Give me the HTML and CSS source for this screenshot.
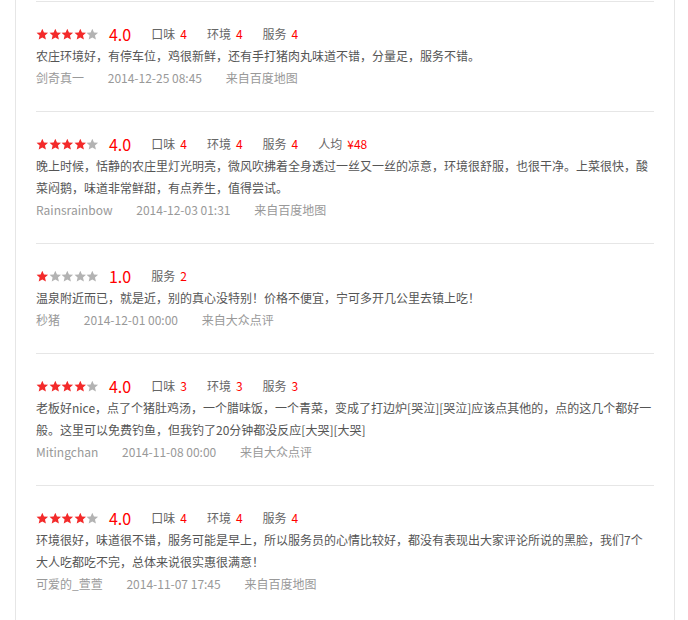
FILE: index.html
```html
<!DOCTYPE html>
<html lang="zh-CN">

<head>
    <meta charset="UTF-8" />
    <meta name="viewport" content="width=device-width" />
    <link rel="stylesheet" href="styles.css">
</head>

<body>
    <svg class="defs" aria-hidden="true">
        <symbol id="star" viewBox="0 0 24 24">
            <polygon points="12,1.2 15.2,8.4 23,9.1 17.1,14.3 18.9,22.1 12,18 5.1,22.1 6.9,14.3 1,9.1 8.8,8.4" />
        </symbol>
    </svg>

    <div class="wrap">
        <ul class="reviews">
            <li class="review">
                <div class="rate">
                    <span class="stars">
                        <svg class="star on"><use href="#star" /></svg>
                        <svg class="star on"><use href="#star" /></svg>
                        <svg class="star on"><use href="#star" /></svg>
                        <svg class="star on"><use href="#star" /></svg>
                        <svg class="star"><use href="#star" /></svg>
                    </span>
                    <span class="score">4.0</span>
                    <span class="item">口味<em>4</em></span>
                    <span class="item">环境<em>4</em></span>
                    <span class="item">服务<em>4</em></span>
                </div>
                <p class="text">农庄环境好，有停车位，鸡很新鲜，还有手打猪肉丸味道不错，分量足，服务不错。</p>
                <div class="meta">
                    <span>剑奇真一</span>
                    <span>2014-12-25 08:45</span>
                    <span>来自百度地图</span>
                </div>
            </li>

            <li class="review">
                <div class="rate">
                    <span class="stars">
                        <svg class="star on"><use href="#star" /></svg>
                        <svg class="star on"><use href="#star" /></svg>
                        <svg class="star on"><use href="#star" /></svg>
                        <svg class="star on"><use href="#star" /></svg>
                        <svg class="star"><use href="#star" /></svg>
                    </span>
                    <span class="score">4.0</span>
                    <span class="item">口味<em>4</em></span>
                    <span class="item">环境<em>4</em></span>
                    <span class="item">服务<em>4</em></span>
                    <span class="item">人均<em>¥48</em></span>
                </div>
                <p class="text">晚上时候，恬静的农庄里灯光明亮，微风吹拂着全身透过一丝又一丝的凉意，环境很舒服，也很干净。上菜很快，酸菜闷鹅，味道非常鲜甜，有点养生，值得尝试。</p>
                <div class="meta">
                    <span>Rainsrainbow</span>
                    <span>2014-12-03 01:31</span>
                    <span>来自百度地图</span>
                </div>
            </li>

            <li class="review">
                <div class="rate">
                    <span class="stars">
                        <svg class="star on"><use href="#star" /></svg>
                        <svg class="star"><use href="#star" /></svg>
                        <svg class="star"><use href="#star" /></svg>
                        <svg class="star"><use href="#star" /></svg>
                        <svg class="star"><use href="#star" /></svg>
                    </span>
                    <span class="score">1.0</span>
                    <span class="item">服务<em>2</em></span>
                </div>
                <p class="text">温泉附近而已，就是近，别的真心没特别！价格不便宜，宁可多开几公里去镇上吃！</p>
                <div class="meta">
                    <span>秒猪</span>
                    <span>2014-12-01 00:00</span>
                    <span>来自大众点评</span>
                </div>
            </li>

            <li class="review">
                <div class="rate">
                    <span class="stars">
                        <svg class="star on"><use href="#star" /></svg>
                        <svg class="star on"><use href="#star" /></svg>
                        <svg class="star on"><use href="#star" /></svg>
                        <svg class="star on"><use href="#star" /></svg>
                        <svg class="star"><use href="#star" /></svg>
                    </span>
                    <span class="score">4.0</span>
                    <span class="item">口味<em>3</em></span>
                    <span class="item">环境<em>3</em></span>
                    <span class="item">服务<em>3</em></span>
                </div>
                <p class="text">老板好nice，点了个猪肚鸡汤，一个腊味饭，一个青菜，变成了打边炉[哭泣][哭泣]应该点其他的，点的这几个都好一般。这里可以免费钓鱼，但我钓了20分钟都没反应[大哭][大哭]</p>
                <div class="meta">
                    <span>Mitingchan</span>
                    <span>2014-11-08 00:00</span>
                    <span>来自大众点评</span>
                </div>
            </li>

            <li class="review">
                <div class="rate">
                    <span class="stars">
                        <svg class="star on"><use href="#star" /></svg>
                        <svg class="star on"><use href="#star" /></svg>
                        <svg class="star on"><use href="#star" /></svg>
                        <svg class="star on"><use href="#star" /></svg>
                        <svg class="star"><use href="#star" /></svg>
                    </span>
                    <span class="score">4.0</span>
                    <span class="item">口味<em>4</em></span>
                    <span class="item">环境<em>4</em></span>
                    <span class="item">服务<em>4</em></span>
                </div>
                <p class="text">环境很好，味道很不错，服务可能是早上，所以服务员的心情比较好，都没有表现出大家评论所说的黑脸，我们7个大人吃都吃不完，总体来说很实惠很满意！</p>
                <div class="meta">
                    <span>可爱的_萱萱</span>
                    <span>2014-11-07 17:45</span>
                    <span>来自百度地图</span>
                </div>
            </li>
        </ul>
    </div>
</body>

</html>
```

FILE: styles.css
```css
/* === review list === */

body {
    margin: 0;
    background: #fff;
    font-family: "Microsoft YaHei", "Noto Sans CJK SC", sans-serif;
    font-size: 12px;
    color: #555;
}

.defs {
    /* holds the star symbol */
    display: none;
}

.wrap {
    /* box with side borders */
    margin-left: 15px;
    width: 618px;
    min-height: 640px;
    padding: 0 20px;
    border-left: 1px solid #e6e6e6;
    border-right: 1px solid #e6e6e6;
}

.reviews {
    list-style: none;
    margin: 0;
    padding: 1px 0 0;
}

.review {
    /* one review */
    border-top: 1px solid #e6e6e6;
    padding: 21px 0 22px;
    line-height: 22px;
}

.rate {
    display: flex;
    align-items: center;
    height: 22px;
}

.stars {
    display: flex;
    align-items: center;
}

.star {
    width: 12.6px;
    height: 12.6px;
    fill: #b3b3b3;
}

.star.on {
    fill: #f32a2a;
}

.score {
    /* big red score */
    margin: 0 20px 0 10px;
    font-size: 16px;
    color: #f00;
}

.item {
    margin-right: 20px;
    color: #666;
}

.item em {
    font-style: normal;
    color: #f00;
    margin-left: 5px;
}

.text {
    margin: 0;
    padding-right: 2px;
}

.meta {
    color: #999;
}

.meta span {
    /* spaces between spans add ~3px */
    margin-right: 21px;
}
```
